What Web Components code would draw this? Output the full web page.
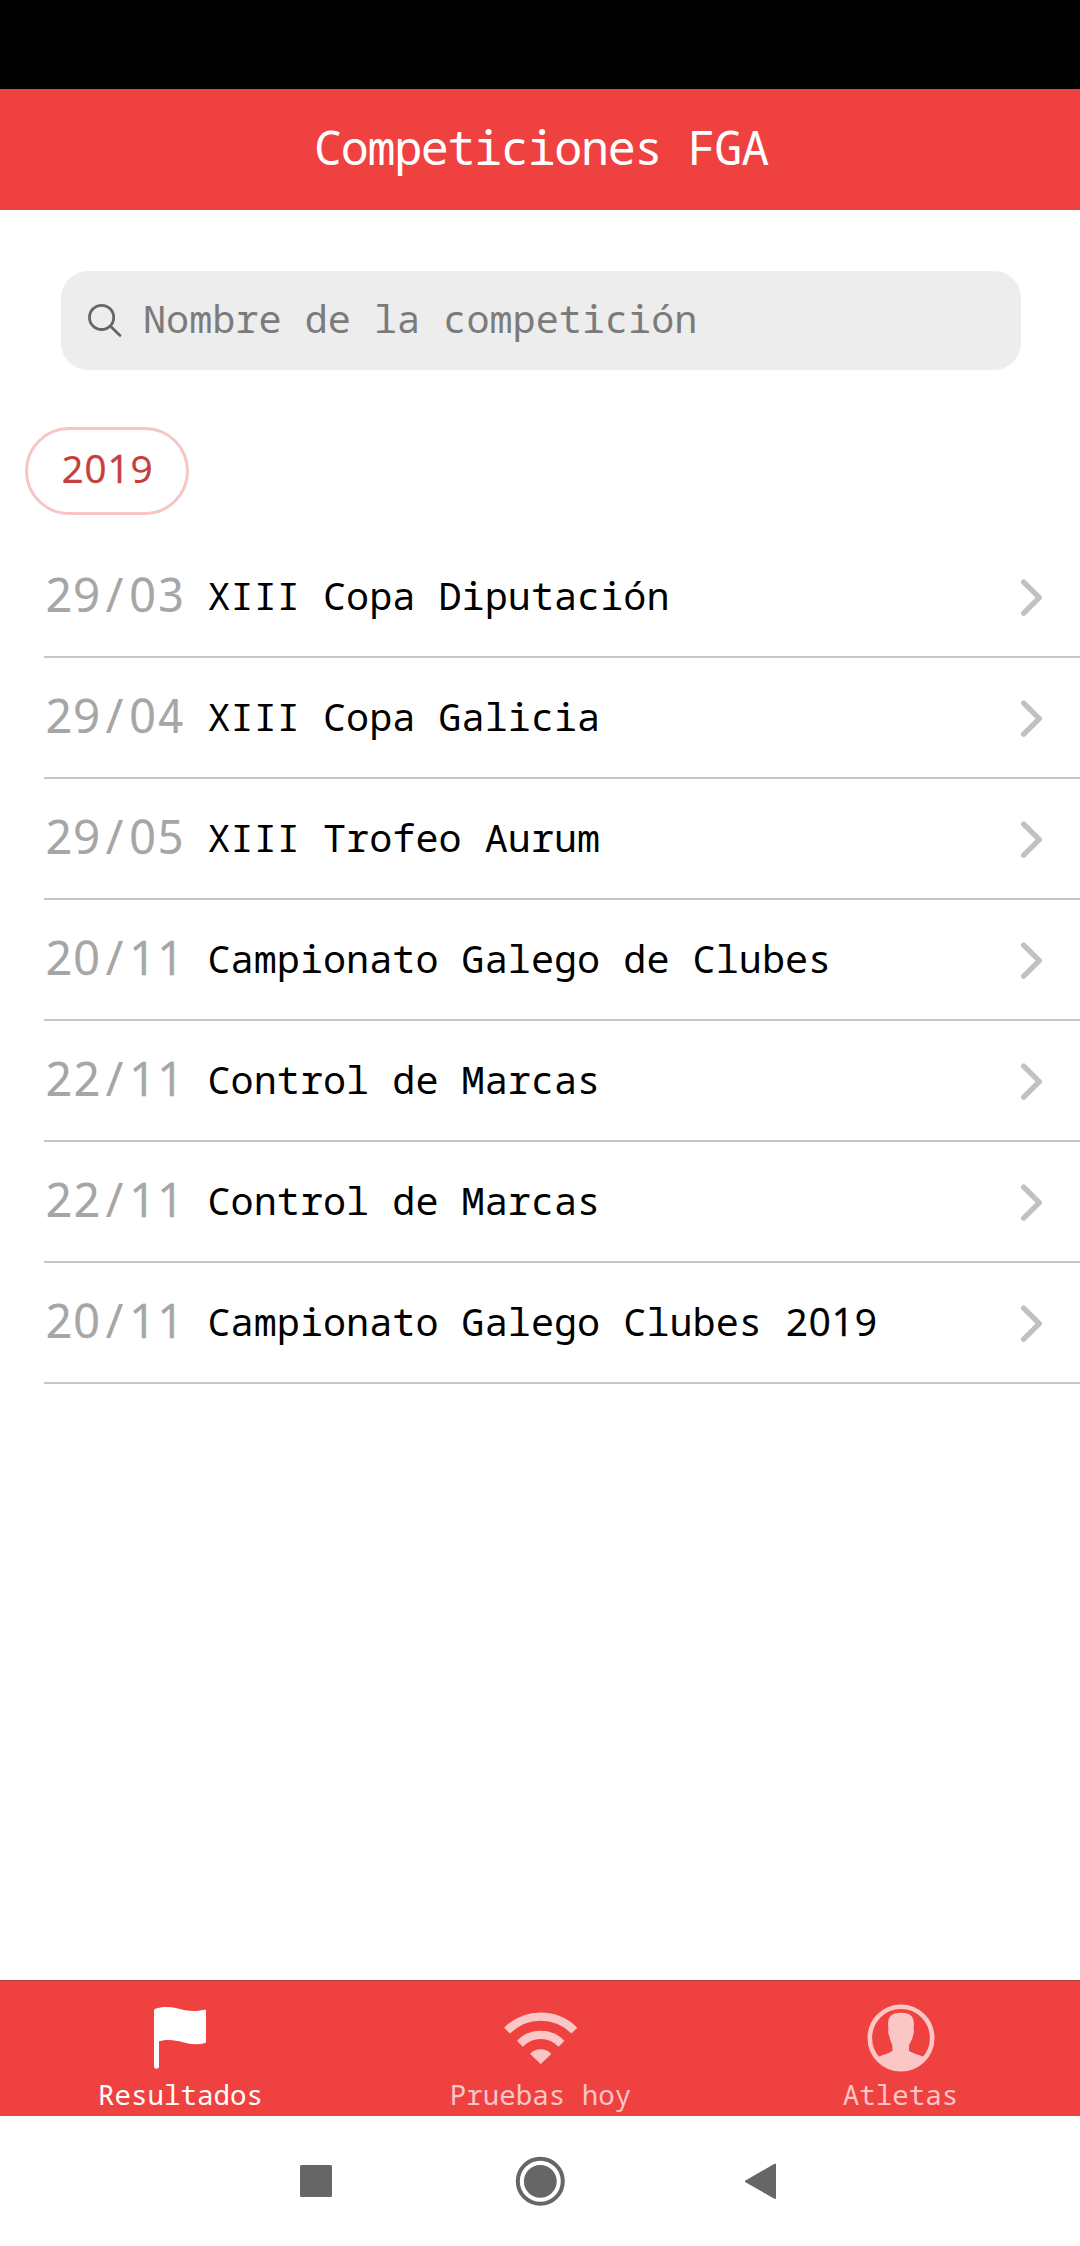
<!DOCTYPE html>
<html lang="es">
<head>
<meta charset="utf-8">
<title>Competiciones FGA</title>
<style>
html,body{margin:0;background:#fff}
body{font-family:"Noto Sans Mono","Droid Sans Mono","DejaVu Sans Mono",monospace;width:1080px;height:2246px;overflow:hidden}
</style>
</head>
<body>
<fga-app></fga-app>
<script>
const define = (name, html) => customElements.define(name, class extends HTMLElement {
  constructor() {
    super();
    const t = document.createElement('template');
    t.innerHTML = html;
    this.attachShadow({ mode: 'open' }).append(t.content.cloneNode(true));
  }
});

// Plain 0 and 1 (no slash, no foot) on the monospace grid
define('fga-num', `<style>
:host{display:inline;font-family:"Open Sans","Noto Sans",sans-serif;letter-spacing:.028em;margin-left:.014em;margin-right:-.014em;line-height:0;-webkit-text-stroke:.4px currentColor}
</style><slot></slot>`);

define('fga-header', `<style>
:host{display:flex;flex:none;box-sizing:border-box;height:210px;border-top:89px solid #000;background:#f04141;color:#fff;align-items:center;justify-content:center;font-size:46.75px;letter-spacing:-1.35px;line-height:60px;white-space:pre}
span{margin:-6px 0 0 2px}
</style><span><slot></slot></span>`);

define('fga-search', `<style>
:host{display:flex;flex:none;box-sizing:border-box;margin:61px 59px 0 61px;height:99px;border-radius:27px;background:#ededed;align-items:center;color:#7b7b7b;font-size:38.5px;line-height:50px;padding-left:26px;gap:20px;white-space:pre}
svg{display:block;flex:none}
span{margin-top:-5px}
</style><svg width="36" height="36" viewBox="0 0 36 36" fill="none" stroke="#666" stroke-width="2.8" stroke-linecap="round"><circle cx="14.6" cy="14.4" r="12.1"/><path d="M23.5 23.2L33 32.4"/></svg><span><slot></slot></span>`);

define('fga-chip', `<style>
:host{display:flex;flex:none;box-sizing:border-box;margin:57px 0 0 25px;width:164px;height:88px;border:3px solid #f6c6c6;border-radius:44px;align-items:center;justify-content:center;color:#c73e3e;font-size:38.5px;line-height:50px}
span{margin-top:-6px}
</style><span><slot></slot></span>`);

define('fga-row', `<style>
:host{display:flex;box-sizing:border-box;height:121px;border-bottom:2px solid #c6c6c8;align-items:baseline;white-space:pre}
.date{width:163px;font-size:46.75px;line-height:60px;color:#a6a6a6;padding:27px 0 0 .5px}
.name{flex:1;font-size:38.5px;line-height:50px;color:#000;position:relative;top:-2px}
svg{flex:none;align-self:center;margin:0 34px 0 0}
</style><span class="date"><slot name="date"></slot></span><span class="name"><slot></slot></span><svg width="28" height="40" viewBox="0 0 28 40" fill="none" stroke="#c1c1c1" stroke-width="5.4" stroke-linecap="round" stroke-linejoin="round"><path d="M5.7 5.2L21.3 20.7L5.7 36.2"/></svg>`);

define('fga-tab', `<style>
:host{display:flex;flex:1;flex-direction:column;align-items:center;padding-top:21px;color:#fbc6c6;font-size:27.5px;line-height:36px;white-space:pre}
:host([active]){color:#fff}
span{margin:3px 0 0 1px}
</style><slot name="icon"></slot><span><slot></slot></span>`);

define('fga-tabs', `<style>
:host{display:flex;flex:none;box-sizing:border-box;height:136px;background:#f04141;border-top:1px solid #b63b3b}
</style><slot></slot>`);

define('system-nav', `<style>
:host{display:flex;flex:none;height:130px;background:#fff;justify-content:center}
</style><svg width="540" height="130" viewBox="270 2116 540 130"><rect x="300" y="2165" width="32" height="32" rx="1.5" fill="#666"/><circle cx="540.3" cy="2181.3" r="22.5" fill="none" stroke="#666" stroke-width="4"/><circle cx="540.3" cy="2181.3" r="16.4" fill="#666"/><path d="M746 2181.3L775 2164.6V2198Z" fill="#666" stroke="#666" stroke-width="2" stroke-linejoin="round"/></svg>`);

const rows = [['29/03','XIII Copa Diputación'],['29/04','XIII Copa Galicia'],['29/05','XIII Trofeo Aurum'],['20/11','Campionato Galego de Clubes'],['22/11','Control de Marcas'],['22/11','Control de Marcas'],['20/11','Campionato Galego Clubes 2019']];
const num = s => s.replace(/[01]+/g, '<fga-num>$&</fga-num>');

define('fga-app', `<style>
:host{display:flex;flex-direction:column;width:1080px;height:2246px;background:#fff}
main{flex:1;min-height:0;display:flex;flex-direction:column}
.list{margin:22px 0 0 44px}
svg{display:block}
</style>
<fga-header>Competiciones FGA</fga-header>
<main>
<fga-search>Nombre de la competición</fga-search>
<fga-chip>${num('2019')}</fga-chip>
<div class="list">${rows.map(([d, n]) => `<fga-row><span slot="date">${num(d)}</span>${num(n)}</fga-row>`).join('')}</div>
</main>
<fga-tabs>
<fga-tab active><svg slot="icon" width="80" height="72" viewBox="0 0 80 72" fill="currentColor"><path d="M14 8.6Q14 7.3 15.3 6.8C21 4.5 29 4.4 36 6C44 7.8 49 9.6 57 9L64.5 7.8Q66 7.5 66 8.8V39.5Q66 40.9 64.6 41.3C57 43 50 42.3 43 40.3C35 38 28 37 19 39.2V65Q19 66.8 16.5 66.8Q14 66.8 14 65Z"/></svg>Resultados</fga-tab>
<fga-tab><svg slot="icon" width="80" height="72" viewBox="0 0 80 72" fill="currentColor" stroke="currentColor" stroke-width="1.6" stroke-linejoin="round"><path d="M5.2 25.7A50.8 50.8 0 0 1 76.2 25.7L71.4 30.5A43.6 43.6 0 0 0 10 30.5Z"/><path d="M18 38.8A32.2 32.2 0 0 1 63.4 38.8L58.5 43.7A25 25 0 0 0 22.9 43.7Z"/><path d="M31.2 51.8A14.2 14.2 0 0 1 50.2 51.8L40.7 60.8Z"/></svg>Pruebas hoy</fga-tab>
<fga-tab><svg slot="icon" width="80" height="72" viewBox="0 0 80 72" fill="currentColor"><circle cx="41" cy="36" r="31.2" fill="none" stroke="currentColor" stroke-width="4.6"/><path d="M32.4 49V43.5C31.5 40.5 29.7 38 29.3 34C28 32 28 29 28.4 27C27.2 17 29 10.7 41 10.7C53 10.7 54.8 17 53.6 27C54 29 54 32 52.9 34C52.3 38 50 40.5 49 43.5V49C53 51.5 58 52.3 64 55A30 30 0 0 1 18 55C24 52.3 29 51.5 32.4 49Z"/></svg>Atletas</fga-tab>
</fga-tabs>
<system-nav></system-nav>`);
</script>
</body>
</html>
